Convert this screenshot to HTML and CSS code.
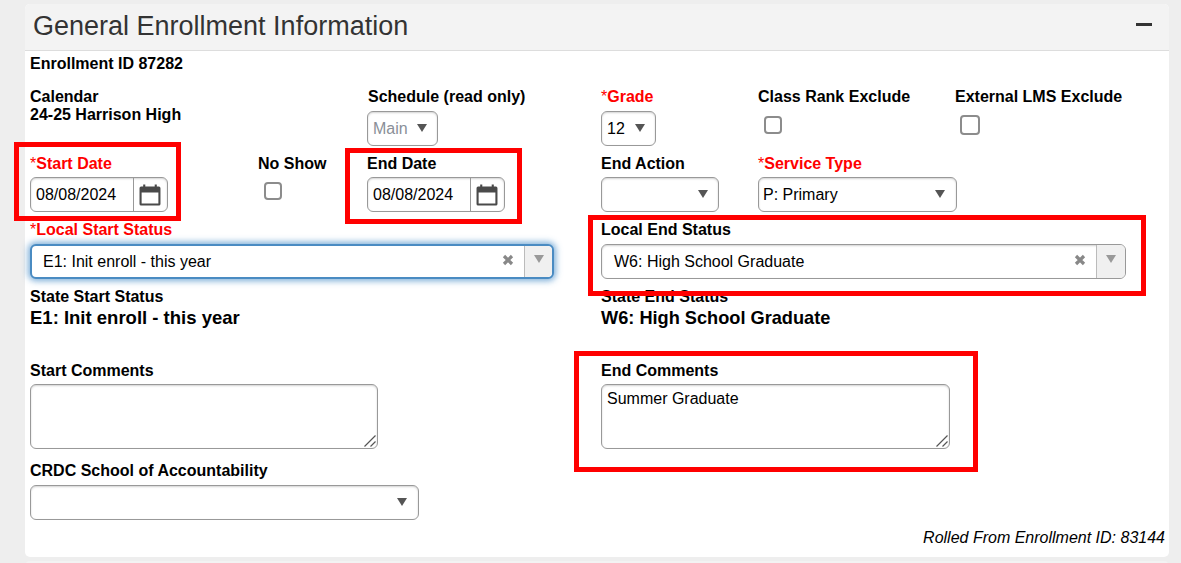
FILE: index.html
```html
<!DOCTYPE html>
<html lang="en">
<head>
<meta charset="utf-8">
<title>General Enrollment Information</title>
<link rel="stylesheet" href="styles.css">
</head>
<body>
<div class="card">
  <header class="card-head">
    <h1 class="title">General Enrollment Information</h1>
    <span class="collapse"></span>
  </header>
  <div class="body">
    <div class="line enroll-id">Enrollment ID 87282</div>
    <div class="form">
      <div class="field c1">
        <div class="line tight">Calendar</div>
        <div class="line">24-25 Harrison High</div>
      </div>
      <div class="field c3">
        <div class="line gap6">Schedule (read only)</div>
        <div class="control select w-schedule disabled"><span class="val">Main</span><i class="tri"></i></div>
      </div>
      <div class="field c4">
        <div class="line req gap6"><span class="star">*</span>Grade</div>
        <div class="control select w-grade"><span class="val">12</span><i class="tri"></i></div>
      </div>
      <div class="field c5">
        <div class="line gap5">Class Rank Exclude</div>
        <span class="check check-rank"></span>
      </div>
      <div class="field c6">
        <div class="line gap5">External LMS Exclude</div>
        <span class="check check-lms"></span>
      </div>

      <div class="field c1">
        <div class="line req"><span class="star">*</span>Start Date</div>
        <div class="control date">
          <span class="date-val">08/08/2024</span>
          <span class="date-btn"><svg class="cal" viewBox="0.500 0 21 21" width="22" height="22"><path class="cal-body" d="M2.500 2.500h17a1.500 1.500 0 0 1 1.500 1.500v15a1.500 1.500 0 0 1-1.500 1.500h-17a1.500 1.500 0 0 1-1.500-1.500v-15a1.500 1.500 0 0 1 1.500-1.500zM3 8v10.500h16V8z"/><path class="cal-tick" d="M5.500 0.500v4M16.500 0.500v4"/></svg></span>
        </div>
      </div>
      <div class="field c2">
        <div class="line">No Show</div>
        <span class="check check-noshow"></span>
      </div>
      <div class="field c3 nudge">
        <div class="line">End Date</div>
        <div class="control date">
          <span class="date-val">08/08/2024</span>
          <span class="date-btn"><svg class="cal" viewBox="0.500 0 21 21" width="22" height="22"><path class="cal-body" d="M2.500 2.500h17a1.500 1.500 0 0 1 1.500 1.500v15a1.500 1.500 0 0 1-1.500 1.500h-17a1.500 1.500 0 0 1-1.500-1.500v-15a1.500 1.500 0 0 1 1.500-1.500zM3 8v10.500h16V8z"/><path class="cal-tick" d="M5.500 0.500v4M16.500 0.500v4"/></svg></span>
        </div>
      </div>
      <div class="field c4">
        <div class="line">End Action</div>
        <div class="control select w-action"><span class="val"></span><i class="tri"></i></div>
      </div>
      <div class="field span2">
        <div class="line req"><span class="star">*</span>Service Type</div>
        <div class="control select w-service"><span class="val">P: Primary</span><i class="tri"></i></div>
      </div>

      <div class="field left-half">
        <div class="line req gap6"><span class="star">*</span>Local Start Status</div>
        <div class="control combo focus">
          <span class="combo-val">E1: Init enroll - this year</span>
          <svg class="clear" viewBox="0 0 12 12" width="12" height="12"><path d="M2 2l8 8M10 2l-8 8"/></svg>
          <span class="combo-arrow"><i class="tri light"></i></span>
        </div>
      </div>
      <div class="field right-half">
        <div class="line gap6">Local End Status</div>
        <div class="control combo">
          <span class="combo-val">W6: High School Graduate</span>
          <svg class="clear" viewBox="0 0 12 12" width="12" height="12"><path d="M2 2l8 8M10 2l-8 8"/></svg>
          <span class="combo-arrow"><i class="tri light"></i></span>
        </div>
      </div>

      <div class="field left-half">
        <div class="line gap4">State Start Status</div>
        <div class="state-val">E1: Init enroll - this year</div>
      </div>
      <div class="field right-half">
        <div class="line gap4">State End Status</div>
        <div class="state-val">W6: High School Graduate</div>
      </div>

      <div class="field left-half push">
        <div class="line">Start Comments</div>
        <div class="area-wrap">
          <textarea class="control area"></textarea>
          <svg class="grip" viewBox="0 0 12 12" width="12" height="12"><path d="M0.500 11.500L11.500 0.500M6.500 11.500L11.500 6.500"/></svg>
        </div>
      </div>
      <div class="field right-half push">
        <div class="line">End Comments</div>
        <div class="area-wrap">
          <textarea class="control area">Summer Graduate</textarea>
          <svg class="grip" viewBox="0 0 12 12" width="12" height="12"><path d="M0.500 11.500L11.500 0.500M6.500 11.500L11.500 6.500"/></svg>
        </div>
      </div>

      <div class="field left-half push-sm">
        <div class="line gap6">CRDC School of Accountability</div>
        <div class="control select w-crdc"><span class="val"></span><i class="tri"></i></div>
      </div>
    </div>
    <div class="rolled">Rolled From Enrollment ID: 83144</div>
  </div>
  <span class="mark mark-start"></span>
  <span class="mark mark-end"></span>
  <span class="mark mark-local"></span>
  <span class="mark mark-comments"></span>
</div>
<div class="next-card"></div>
</body>
</html>
```
FILE: styles.css
```css
* { box-sizing: border-box; }
html, body { height: 100%; }
body {
  margin: 0;
  padding: 4px 12px 0 25px;
  background: #eeeeee;
  font-family: "Liberation Sans", Arial, sans-serif;
  color: #000;
  overflow: hidden;
}
.card {
  height: 553px;
  background: #fff;
  border-radius: 5px;
}
.card-head {
  height: 47px;
  background: #f3f3f3;
  border-bottom: 1px solid #dddddd;
  border-radius: 5px 5px 0 0;
  display: flex;
  align-items: center;
  justify-content: space-between;
  padding: 0 17px 0 8px;
}
.title {
  margin: 0;
  font-size: 27px;
  font-weight: 400;
  color: #333;
  line-height: 30px;
  position: relative;
  top: -1px;
}
.collapse {
  width: 16px;
  height: 3px;
  background: #333;
  margin-top: -6px;
}
.body { padding: 3px 4px 0 5px; }
.line {
  font-size: 16px;
  font-weight: 700;
  line-height: 20px;
  height: 18px;
  white-space: nowrap;
  margin-bottom: 5px;
}
.tight { margin-bottom: 0; }
.gap6 { margin-bottom: 6px; }
.gap5 { margin-bottom: 5px; }
.gap4 { margin-bottom: 4px; }
.enroll-id { margin-bottom: 15px; }
.req { color: #f00; }
.star { font-weight: 400; }
.form {
  display: grid;
  grid-template-columns: 228px 110px 233px 157px 197px 1fr;
  row-gap: 8px;
}
.field { display: flex; flex-direction: column; align-items: flex-start; }
.c1 { grid-column: 1; }
.c2 { grid-column: 2; }
.c3 { grid-column: 3; }
.c4 { grid-column: 4; }
.c5 { grid-column: 5; }
.c6 { grid-column: 6; }
.nudge { margin-left: -1px; }
.span2 { grid-column: 5 / 7; }
.left-half { grid-column: 1 / 4; }
.right-half { grid-column: 4 / 7; }
.push { margin-top: 26px; }
.push-sm { margin-top: 4px; }
.control {
  border: 1px solid #999;
  border-radius: 6px;
  background: #fff;
  box-shadow: inset 0 1px 2px rgba(0,0,0,.18);
  font-family: inherit;
  font-size: 16px;
  color: #000;
}
.select {
  height: 35px;
  display: flex;
  align-items: center;
  justify-content: space-between;
  padding: 0 10px 0 5px;
}
.val { line-height: 18px; }
.disabled .val { color: #8a8f98; }
.w-schedule { width: 71px; margin-left: -1px; }
.w-grade { width: 55px; }
.w-action { width: 118px; }
.w-service { width: 199px; padding: 0 11px 0 4px; }
.w-crdc { width: 389px; padding-right: 11px; }
.tri {
  display: block;
  width: 0;
  height: 0;
  border-left: 5px solid transparent;
  border-right: 5px solid transparent;
  border-top: 8px solid #555;
  margin-top: -1px;
}
.tri.light { border-top-color: #999; }
.check {
  display: block;
  width: 18px;
  height: 18px;
  border: 2px solid #8c8c8c;
  border-radius: 4px;
  background: #fff;
}
.check-noshow { margin: 5px 0 0 6px; }
.check-rank { margin: 6px 0 0 6px; }
.check-lms { width: 20px; height: 20px; margin: 5px 0 0 5px; }
.date {
  width: 138px;
  height: 35px;
  display: flex;
}
.date-val {
  width: 103px;
  border-right: 1px solid #999;
  padding-left: 5px;
  line-height: 33px;
}
.date-btn {
  flex: 1;
  display: flex;
  align-items: center;
  justify-content: center;
  padding-right: 1px;
}
.cal-body { fill: #4a4a4a; fill-rule: evenodd; }
.cal-tick { stroke: #4a4a4a; stroke-width: 2; fill: none; }
.combo {
  width: 524px;
  height: 35px;
  display: flex;
  align-items: center;
}
.right-half .combo { width: 525px; }
.combo-val { flex: 1; padding-left: 12px; }
.clear {
  margin: -4px 10px 0 0;
  stroke: #888;
  stroke-width: 3.200;
  fill: none;
}
.combo-arrow {
  width: 29px;
  height: 100%;
  border-left: 1px solid #bbb;
  background: #f0f0f0;
  border-radius: 0 5px 5px 0;
  display: flex;
  align-items: center;
  justify-content: center;
  padding-bottom: 4px;
}
.focus {
  border: 2px solid #4a8bc2;
  box-shadow: 0 0 6px 2px rgba(70,140,200,.7);
}
.focus .combo-val { padding-left: 11px; }
.focus .combo-arrow { width: 28px; }
.state-val {
  font-size: 18.200px;
  font-weight: 700;
  line-height: 18px;
}
.left-half .state-val { font-size: 18.500px; }
.area-wrap { position: relative; }
.area {
  display: block;
  width: 348px;
  height: 65px;
  padding: 5px 5px;
  line-height: 18px;
  resize: none;
  outline: 0;
  margin: 0;
}
.right-half .area { width: 349px; }
.grip {
  position: absolute;
  right: 2px;
  bottom: 2px;
  stroke: #555;
  stroke-width: 1.200;
  fill: none;
}
.rolled {
  margin-top: 9px;
  text-align: right;
  font-size: 16px;
  font-style: italic;
  line-height: 18px;
}
.next-card {
  height: 10px;
  margin-top: 4px;
  background: #f3f3f3;
  border-radius: 5px 5px 0 0;
}
.mark {
  position: absolute;
  border: 5px solid #f00;
  pointer-events: none;
}
.mark-start { left: 14px; top: 142px; width: 167px; height: 79px; }
.mark-end { left: 345px; top: 148px; width: 177px; height: 76px; }
.mark-local { left: 588px; top: 215px; width: 558px; height: 81px; }
.mark-comments { left: 574px; top: 351px; width: 404px; height: 121px; }
```
